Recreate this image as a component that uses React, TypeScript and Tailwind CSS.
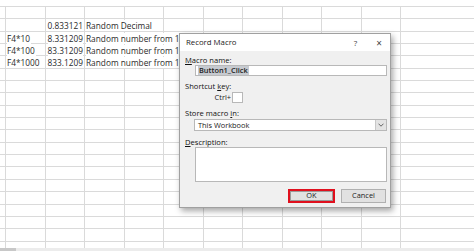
import React from 'react';

const rows = Array.from({ length: 20 }, (_, i) => i);
const cols = Array.from({ length: 11 }, (_, i) => i);

const cells: Record<string, { text: string; right?: boolean }> = {
  '1-1': { text: '0.833121', right: true },
  '1-2': { text: 'Random Decimal' },
  '2-0': { text: 'F4*10' },
  '2-1': { text: '8.331209', right: true },
  '2-2': { text: 'Random number from 1 to 10' },
  '3-0': { text: 'F4*100' },
  '3-1': { text: '83.31209', right: true },
  '3-2': { text: 'Random number from 1 to 100' },
  '4-0': { text: 'F4*1000' },
  '4-1': { text: '833.1209', right: true },
  '4-2': { text: 'Random number from 1 to 1000' },
};

function Sheet() {
  return (
    <div className="flex flex-col pt-[6px]">
      {rows.map((r) => (
        <div key={r} className="flex h-[12.35px] border-t border-[#dadada]">
          <div className="w-[5px] shrink-0" />
          {cols.map((c) => {
            const cell = cells[`${r}-${c}`];
            return (
              <div
                key={c}
                className="relative w-[39.5px] shrink-0 border-l border-[#dadada]"
              >
                {cell ? (
                  <span
                    className={[
                      'absolute top-[1px] z-10 whitespace-nowrap bg-white text-[8.3px] leading-[11px] text-[#2a2a2a]',
                      cell.right ? 'right-[1px]' : 'left-[1px] pr-[1px]',
                    ].join(' ')}
                  >
                    {cell.text}
                  </span>
                ) : null}
              </div>
            );
          })}
        </div>
      ))}
    </div>
  );
}

function Label({ text, u, rest }: { text: string; u: string; rest: string }) {
  return (
    <div className="h-[10px] pl-[5px] text-[7.6px] leading-[10px] text-[#111]">
      {text}
      <span className="underline">{u}</span>
      {rest}
    </div>
  );
}

function RecordMacro() {
  return (
    <div className="absolute left-[179px] top-[33px] z-20 flex h-[175px] w-[212px] flex-col border border-[#a0a0a0] bg-[#f0f0f0] shadow-[2px_3px_6px_rgba(0,0,0,0.35)]">
      <div className="flex h-[17px] items-center bg-white pl-[6px] text-[7.8px] text-[#222]">
        <span>Record Macro</span>
        <span className="ml-auto mr-[19px] text-[8px] text-[#444]">?</span>
        <span className="mr-[8px] text-[10px] leading-none text-[#444]">×</span>
      </div>

      <div className="mt-[4px]">
        <Label text="" u="M" rest="acro name:" />
      </div>
      <div className="ml-[15px] flex h-[11px] w-[192px] items-center border border-[#b8b8b8] bg-white pl-[2px]">
        <span className="bg-[#c6cad0] px-[1px] text-[7.4px] font-semibold leading-[9px] text-[#222]">
          Button1_Click
        </span>
      </div>

      <div className="mt-[5px]">
        <Label text="Shortcut " u="k" rest="ey:" />
      </div>
      <div className="mt-[1px] flex h-[11px] items-center">
        <span className="ml-[28px] w-[24px] pr-[1px] text-right text-[7.4px] text-[#222]">Ctrl+</span>
        <div className="h-[11px] w-[11px] border border-[#b8b8b8] bg-white" />
      </div>

      <div className="mt-[5px]">
        <Label text="Store macro " u="i" rest="n:" />
      </div>
      <div className="ml-[14px] mt-[1px] flex h-[12px] w-[193px] items-stretch border border-[#b8b8b8] bg-white">
        <span className="flex-1 pl-[3px] text-[7.4px] leading-[10px] text-[#222]">This Workbook</span>
        <div className="flex w-[11px] items-center justify-center border-l border-[#c8c8c8] bg-[#e3e3e3]">
          <svg width="6" height="4" viewBox="0 0 6 4">
            <path d="M0.5 0.7 L3 3.2 L5.5 0.7" fill="none" stroke="#555" strokeWidth="0.9" />
          </svg>
        </div>
      </div>

      <div className="mt-[6px]">
        <Label text="" u="D" rest="escription:" />
      </div>
      <div className="ml-[15px] h-[35px] w-[192px] border border-[#b8b8b8] bg-white" />

      <div className="mt-[7px] flex justify-end gap-[6px] pr-[4px]">
        <button
          type="button"
          className="flex h-[14px] w-[47px] items-center justify-center border-2 border-[#e0101e] bg-[#e1e1e1] text-[7.4px] text-[#222]"
        >
          <span className="flex h-full w-full items-center justify-center border border-[#9a9a9a]">OK</span>
        </button>
        <button
          type="button"
          className="flex h-[14px] w-[45px] items-center justify-center border border-[#b0b0b0] bg-[#e1e1e1] text-[7.4px] text-[#222]"
        >
          Cancel
        </button>
      </div>
    </div>
  );
}

export default function App() {
  return (
    <div
      className="relative h-[251px] w-[474px] overflow-hidden bg-white"
      style={{ fontFamily: '"Open Sans", "Noto Sans", sans-serif' }}
    >
      <Sheet />
      <div className="absolute bottom-0 left-0 flex h-[3px] w-full">
        <div className="w-[16px] bg-[#c8c8c8]" />
        <div className="flex-1 bg-[#ececec]" />
      </div>
      <RecordMacro />
    </div>
  );
}
